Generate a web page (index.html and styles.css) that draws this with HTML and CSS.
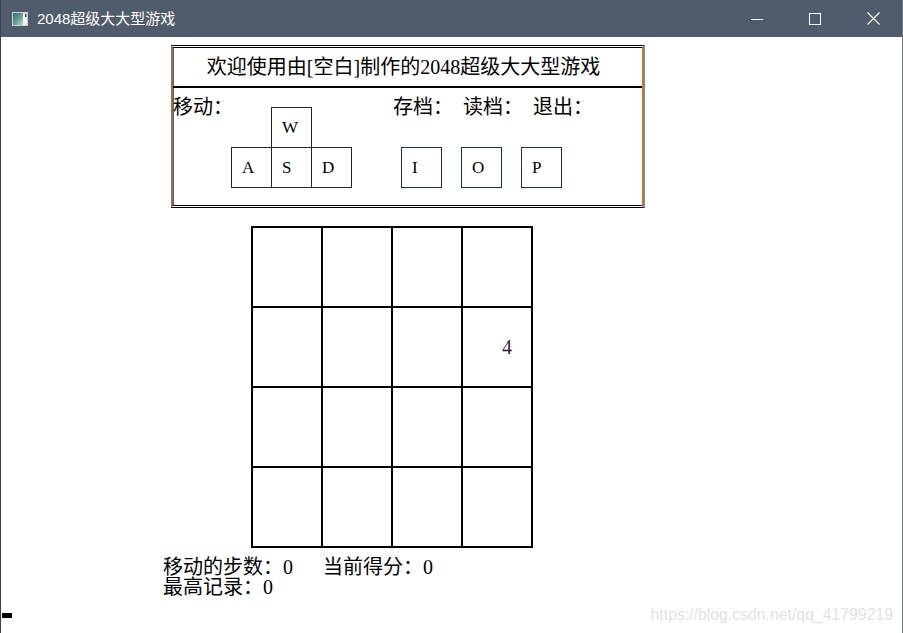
FILE: index.html
```
<!DOCTYPE html>
<html lang="zh-CN">
<head>
<meta charset="utf-8">
<title>2048超级大大型游戏</title>
<link rel="stylesheet" href="styles.css">
</head>
<body>
<div class="window">
  <div class="titlebar">
    <svg class="app-icon" width="16" height="14" viewBox="0 0 16 14">
      <defs>
        <linearGradient id="ig" x1="0" y1="0" x2="1" y2="1">
          <stop offset="0" stop-color="#2d6a74"/>
          <stop offset="0.6" stop-color="#6ea79a"/>
          <stop offset="1" stop-color="#c4e0cc"/>
        </linearGradient>
      </defs>
      <rect x="0.5" y="0.5" width="15" height="13" fill="#f4f6f6" stroke="#c9d1d5"/>
      <rect x="1" y="1" width="10" height="12" fill="url(#ig)"/>
      <rect x="13" y="2" width="1.5" height="3" fill="#3a4048"/>
    </svg>
    <span class="title">2048超级大大型游戏</span>
    <div class="caption-buttons">
      <div class="cap">
        <svg width="12" height="12" viewBox="0 0 12 12"><line x1="0" y1="6.5" x2="12" y2="6.5" stroke="#fff" stroke-width="1"/></svg>
      </div>
      <div class="cap">
        <svg width="12" height="12" viewBox="0 0 12 12"><rect x="0.5" y="0.5" width="11" height="11" fill="none" stroke="#fff" stroke-width="1"/></svg>
      </div>
      <div class="cap">
        <svg width="13" height="13" viewBox="0 0 13 13"><path d="M0.5 0.5 L12.5 12.5 M12.5 0.5 L0.5 12.5" stroke="#fff" stroke-width="1.1" fill="none"/></svg>
      </div>
    </div>
  </div>

  <div class="client">
    <div class="panel">
      <div class="panel-head">欢迎使用由[空白]制作的2048超级大大型游戏</div>
      <div class="panel-body">
        <div class="row-top">
          <span class="lbl lbl-move">移动：</span>
          <div class="key key-w">W</div>
          <span class="lbl lbl-first">存档：</span>
          <span class="lbl">读档：</span>
          <span class="lbl">退出：</span>
        </div>
        <div class="row-bottom">
          <div class="key">A</div>
          <div class="key key-join">S</div>
          <div class="key key-join">D</div>
          <div class="key key-i">I</div>
          <div class="key key-gap">O</div>
          <div class="key key-gap">P</div>
        </div>
      </div>
    </div>

    <div class="board">
      <div class="cell"></div><div class="cell"></div><div class="cell"></div><div class="cell"></div>
      <div class="cell"></div><div class="cell"></div><div class="cell"></div><div class="cell">4</div>
      <div class="cell"></div><div class="cell"></div><div class="cell"></div><div class="cell"></div>
      <div class="cell"></div><div class="cell"></div><div class="cell"></div><div class="cell"></div>
    </div>

    <div class="stats">
      <div>移动的步数：0<span class="score">当前得分：0</span></div>
      <div>最高记录：0</div>
    </div>

    <div class="cursor"></div>

    <div class="watermark">https://blog.csdn.net/qq_41799219</div>
  </div>
</div>
</body>
</html>
```
FILE: styles.css
```
* { box-sizing: border-box; }

html, body {
  margin: 0;
  padding: 0;
}

body {
  width: 903px;
  height: 633px;
  overflow: hidden;
  background: #ffffff;
  font-family: "Liberation Serif", "Noto Sans CJK SC", serif;
}

.window {
  width: 903px;
  height: 633px;
  display: flex;
  flex-direction: column;
  border-left: 1px solid #3b4350;
  border-right: 1px solid #6f7780;
}

/* ---------- title bar ---------- */
.titlebar {
  height: 37px;
  flex-shrink: 0;
  background: #505c6b;
  display: flex;
  align-items: center;
}

.app-icon {
  margin-left: 11px;
  flex-shrink: 0;
}

.title {
  margin-left: 9px;
  color: #ffffff;
  font-family: "Liberation Sans", "Noto Sans CJK SC", sans-serif;
  font-size: 15px;
  line-height: 20px;
}

.caption-buttons {
  margin-left: auto;
  display: flex;
  height: 37px;
}

.cap {
  width: 58px;
  height: 37px;
  display: flex;
  align-items: center;
  justify-content: center;
}

/* ---------- client ---------- */
.client {
  flex: 1;
  position: relative;
  padding-top: 8px;
}

.panel {
  margin-left: 170px;
  width: 473px;
  border-top: 3px double #000;
  border-bottom: 3px double #000;
  border-left: 2px solid #a86a34;
  border-right: 2px solid #d2761e;
  box-shadow: inset 1px 0 0 #3f6c9a, 1px 0 0 #4a98dc;
}

.panel-head {
  height: 40px;
  display: flex;
  align-items: center;
  justify-content: center;
  padding-right: 8px;
  font-size: 20px;
  line-height: 20px;
  color: #000;
  border-bottom: 2px solid #000;
}

.panel-body {
  padding: 9px 0 17px 0;
  font-size: 20px;
  line-height: 20px;
  color: #000;
}

.row-top {
  display: flex;
  align-items: flex-start;
  height: 50px;
}

.lbl {
  width: 70px;
  white-space: nowrap;
}

.lbl-move {
  width: 98px;
}

.lbl-first {
  margin-left: 81px;
}

.row-bottom {
  display: flex;
  padding-left: 58px;
}

.key {
  width: 41px;
  height: 41px;
  flex-shrink: 0;
  border: 1px solid #1a2434;
  display: flex;
  align-items: center;
  padding-left: 10px;
  font-size: 17px;
  line-height: 17px;
  color: #000;
}

.key-w { margin-top: 10px; }
.key-join { margin-left: -1px; }
.key-i { margin-left: 49px; border-color: #163250; }
.key-gap { margin-left: 19px; border-color: #163250; }

/* ---------- board ---------- */
.board {
  margin: 18px 0 0 250px;
  width: 282px;
  display: grid;
  grid-template-columns: repeat(4, 70px);
  grid-template-rows: repeat(4, 80px);
  border-top: 2px solid #000;
  border-left: 2px solid #000;
}

.cell {
  border-right: 2px solid #000;
  border-bottom: 2px solid #000;
  display: flex;
  align-items: center;
  padding-left: 39px;
  font-size: 20px;
  color: #3a1838;
}

/* ---------- stats ---------- */
.stats {
  margin: 9px 0 0 162px;
  font-size: 20px;
  line-height: 20px;
  color: #000;
  white-space: nowrap;
}

.score {
  margin-left: 30px;
}

.cursor {
  margin: 16px 0 0 1px;
  width: 10px;
  height: 5px;
  background: #000;
}

.watermark {
  position: absolute;
  right: 9px;
  top: 568px;
  font-family: "Liberation Sans", sans-serif;
  font-size: 15.8px;
  line-height: 20px;
  color: #e2e2e2;
}
```
